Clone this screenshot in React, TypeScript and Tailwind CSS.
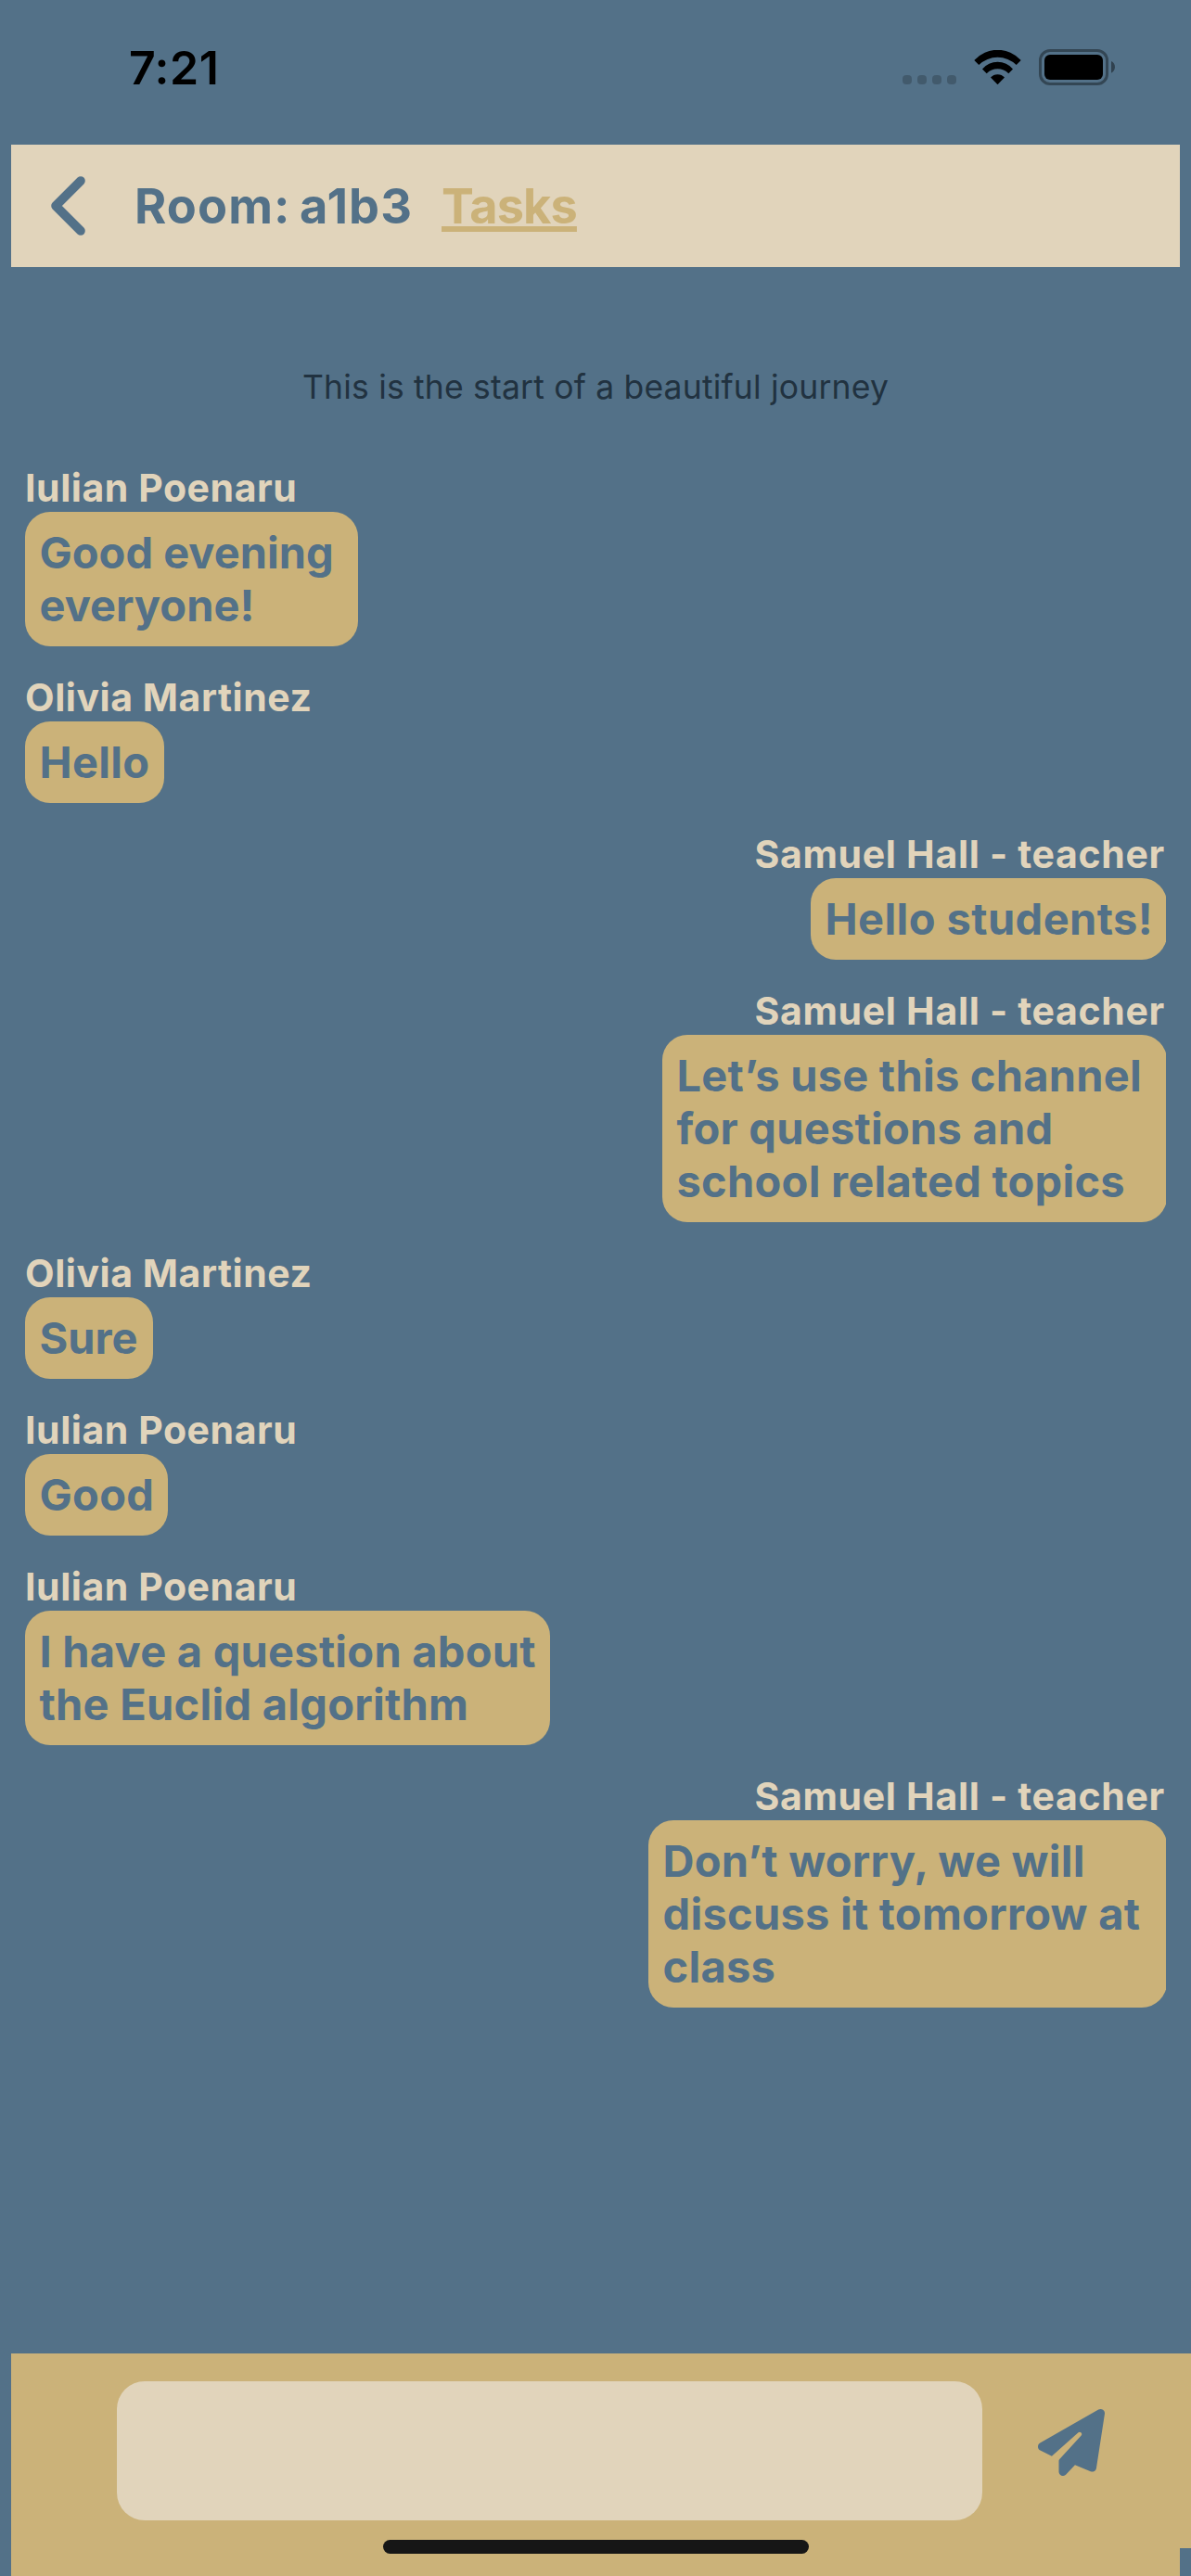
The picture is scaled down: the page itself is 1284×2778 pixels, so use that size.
type Message = {
  id: number;
  author: string;
  lines: string[];
  own?: boolean;
  size: string;
};

const messages: Message[] = [
  { id: 1, author: "Iulian Poenaru", lines: ["Good evening", "everyone!"], size: "w-[359px] tracking-[0px]" },
  { id: 2, author: "Olivia Martinez", lines: ["Hello"], size: "w-[150px] tracking-[0.3px]" },
  { id: 3, author: "Samuel Hall - teacher", lines: ["Hello students!"], own: true, size: "w-[384px] tracking-[0.42px]" },
  {
    id: 4,
    author: "Samuel Hall - teacher",
    lines: ["Let’s use this channel", "for questions and", "school related topics"],
    own: true,
    size: "w-[544px] tracking-[0.25px]",
  },
  { id: 5, author: "Olivia Martinez", lines: ["Sure"], size: "w-[138px] tracking-[0px]" },
  { id: 6, author: "Iulian Poenaru", lines: ["Good"], size: "w-[154px] tracking-[0.3px]" },
  { id: 7, author: "Iulian Poenaru", lines: ["I have a question about", "the Euclid algorithm"], size: "w-[566px] tracking-[0.25px]" },
  {
    id: 8,
    author: "Samuel Hall - teacher",
    lines: ["Don’t worry, we will", "discuss it tomorrow at", "class"],
    own: true,
    size: "w-[559px] tracking-[0.26px]",
  },
];

function StatusBar() {
  return (
    <div className="flex h-[156px] shrink-0 items-start justify-between pl-[139px] pr-[82px] text-black">
      <span className="mt-[43px] text-[50px] font-semibold leading-[60px] tracking-[0.5px]">7:21</span>
      <div className="mt-[53px] flex h-[39px]">
        <div className="mr-[19px] mt-[28px] flex gap-[6px]">
          {[0, 1, 2, 3].map((dot) => (
            <span key={dot} className="size-[10px] rounded-[4px] bg-black/20" />
          ))}
        </div>
        <svg className="mr-[19px] mt-px h-[37px] w-[51px]" viewBox="0 0 51 37" fill="currentColor">
          <path d="M0.3 11A33.9 33.9 0 0 1 50.7 11L45.7 16A29 29 0 0 0 5.3 16Z" />
          <path d="M9 20.4A21.6 21.6 0 0 1 42 20.4L37.3 25.2A16.6 16.6 0 0 0 13.7 25.2Z" />
          <path d="M18 29.6A10 10 0 0 1 33 29.6L25.5 37.2Z" />
        </svg>
        <svg className="h-[39px] w-[82px]" viewBox="0 0 82 39">
          <rect x="1.5" y="1.5" width="72" height="36" rx="10.5" fill="none" stroke="#000" strokeOpacity="0.38" strokeWidth="3" />
          <rect x="6" y="6" width="63" height="27" rx="6" fill="#000" />
          <path d="M78 13C80.6 14.2 82 16.6 82 19.3S80.6 24.5 78 25.7Z" fill="#000" fillOpacity="0.42" />
        </svg>
      </div>
    </div>
  );
}

function RoomHeader() {
  return (
    <header className="mx-3 flex h-[132px] shrink-0 items-center bg-[#E1D4BB] pl-[43px] text-[52.3px] font-bold leading-[64px]">
      <svg className="h-16 w-[38px]" viewBox="0 0 38 64" fill="none" stroke="#537188" strokeWidth="9.6" strokeLinecap="round" strokeLinejoin="round">
        <path d="M32 5L5 32L32 59" />
      </svg>
      <h1 className="ml-[52px] w-[331px] whitespace-nowrap tracking-[1.1px] [word-spacing:-4px]">Room: a1b3</h1>
      <a className="whitespace-nowrap text-[#CBB279] underline decoration-[6px] underline-offset-[3px] tracking-[-0.89px] [text-decoration-skip-ink:none]">
        Tasks
      </a>
    </header>
  );
}

function Bubble({ message }: { message: Message }) {
  return (
    <article className={message.own ? "flex flex-col items-end overflow-hidden" : "flex flex-col items-start"}>
      <p
        className={`whitespace-nowrap text-[41px] font-bold leading-[51px] text-[#E1D4BB] ${
          message.own ? "pr-px tracking-[0.69px]" : "tracking-[0.55px]"
        }`}
      >
        {message.author}
      </p>
      <div className={message.own ? "-mr-px" : ""}>
        <div className={`rounded-[27px] bg-[#CBB279] pb-[16.5px] pl-[15.5px] pt-[14.5px] text-[47px] font-bold leading-[57px] ${message.size}`}>
          {message.lines.map((line) => (
            <p key={line} className="whitespace-nowrap">
              {line}
            </p>
          ))}
        </div>
      </div>
    </article>
  );
}

function Composer() {
  return (
    <footer className="relative ml-3 flex h-[240px] shrink-0 items-start bg-[#CBB279] pl-[114px] pt-[30px]">
      <div className="h-[150px] w-[933px] rounded-[30px] bg-[#E1D4BB]" />
      <svg className="ml-[60px] mt-[30px] size-[72px]" viewBox="0 0 512 512" fill="#537188">
        <path d="M498.1 5.6c10.1 7 15.4 19.1 13.5 31.2l-64 416c-1.5 9.7-7.4 18.2-16 23s-18.9 5.4-28 1.6L284 427.7l-68.5 74.1c-8.9 9.7-22.9 12.9-35.2 8.1S160 493.2 160 480V396.4c0-4 1.5-7.8 4.2-10.7L331.8 202.8c5.8-6.3 5.6-16-.4-22s-15.7-6.4-22-.7L106 360.8 17.7 316.6C7.1 311.3 .3 300.7 0 288.9s5.9-22.8 16.1-28.7l448-256c10.7-6.1 23.9-5.5 34 1.4z" />
      </svg>
      <span className="absolute bottom-6 left-[401px] h-[15px] w-[459px] rounded-full bg-[#161616]" />
      <span className="absolute bottom-0 right-0 h-[30px] w-3 bg-[#537188]" />
    </footer>
  );
}

export default function App() {
  return (
    <div className="flex h-[2778px] w-[1284px] flex-col overflow-hidden bg-[#537188] font-['Inter',sans-serif] text-[#537188]">
      <StatusBar />
      <RoomHeader />
      <main className="flex grow flex-col px-[27px] pt-[105px]">
        <p className="mb-[58px] text-center text-[35.5px] leading-[50px] tracking-[0.19px] text-[#213240]">
          This is the start of a beautiful journey
        </p>
        <div className="flex flex-col gap-[30px]">
          {messages.map((message) => (
            <Bubble key={message.id} message={message} />
          ))}
        </div>
      </main>
      <Composer />
    </div>
  );
}
